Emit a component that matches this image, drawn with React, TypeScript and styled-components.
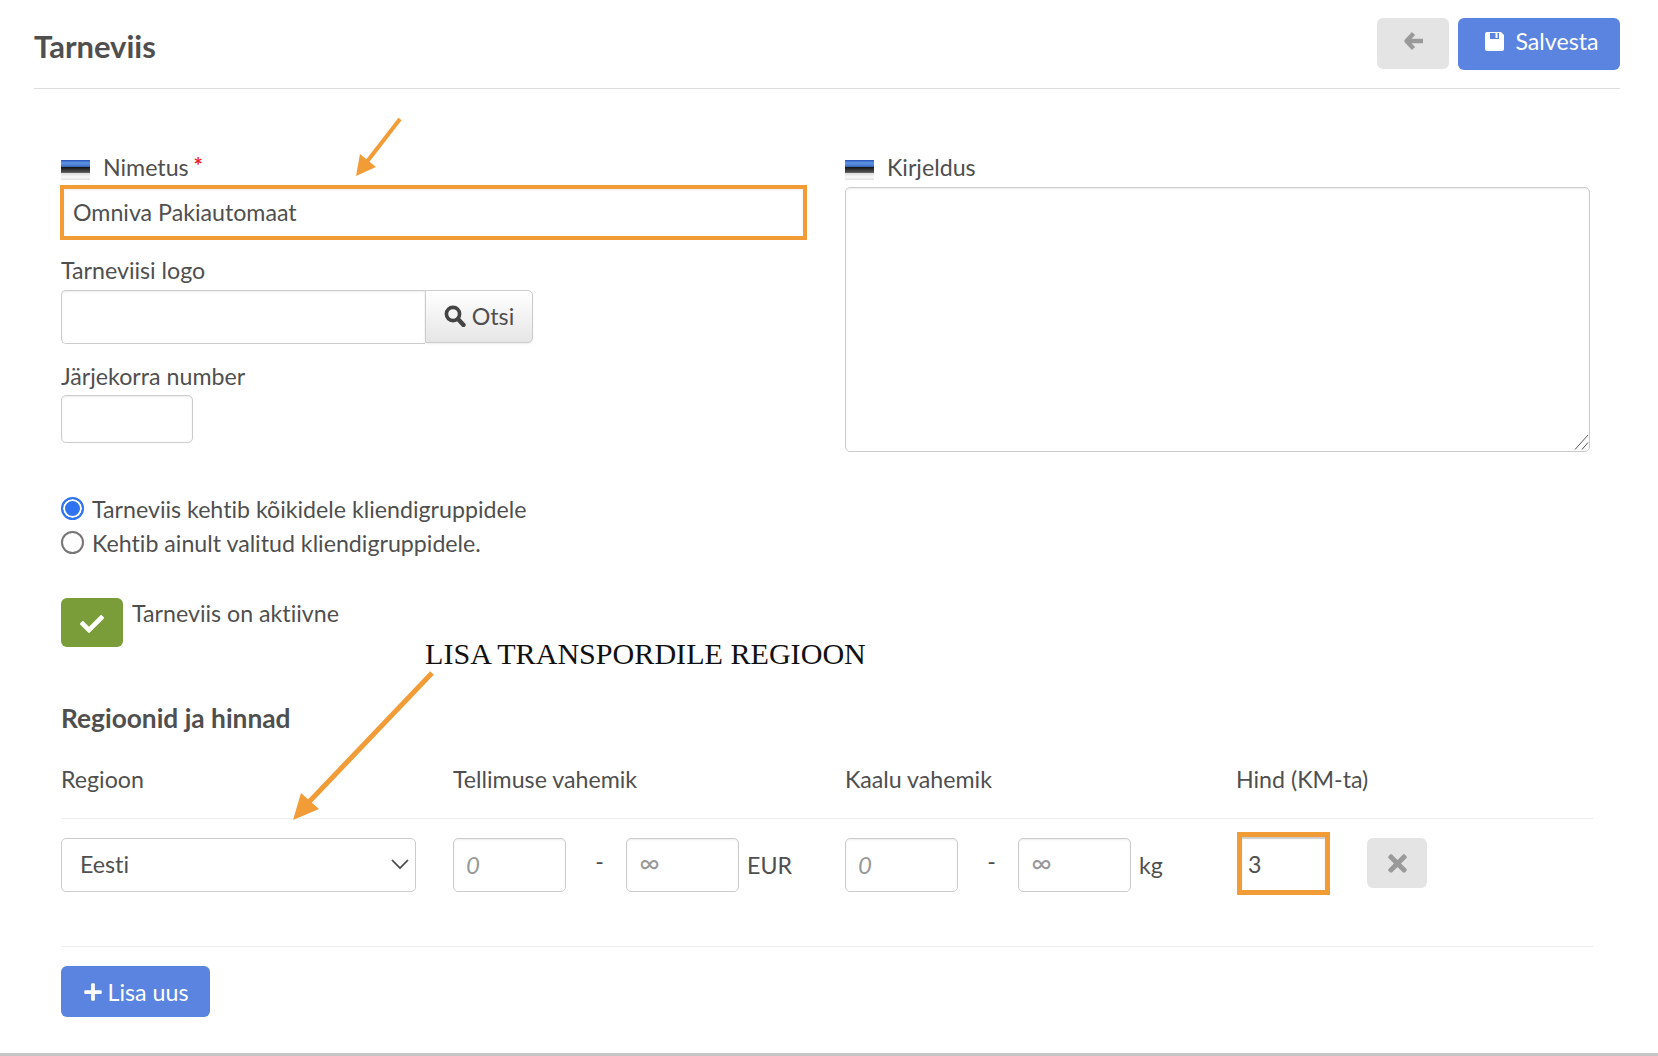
import * as React from "react";
import styled, { createGlobalStyle } from "styled-components";
import { FaCheck, FaPlus, FaTimes } from "react-icons/fa";

const GlobalStyle = createGlobalStyle`
  html, body {
    margin: 0;
    padding: 0;
    background: white;
  }
  body {
    font-family: "Lato", "Liberation Sans", sans-serif;
    font-size: 23.2px;
    font-variant-ligatures: none;
    color: #4f4f4f;
  }
  * {
    box-sizing: border-box;
  }
`;

const Page = styled.div`
  position: relative;
  width: 1658px;
  height: 1056px;
  overflow: hidden;
  border-bottom: 3px solid #c6c6c6;
  padding: 18px 38px 0 34px;
`;

const Header = styled.header`
  display: flex;
  justify-content: space-between;
  height: 71px;
  border-bottom: 1px solid #dddddd;
`;

const Title = styled.h1`
  margin: 8px 0 0;
  font-size: 31px;
  line-height: 40px;
  font-weight: 700;
`;

const HeaderActions = styled.div`
  display: flex;
  gap: 9px;
  align-items: flex-start;
`;

const BaseButton = styled.button`
  display: flex;
  align-items: center;
  justify-content: center;
  border: 0;
  border-radius: 6px;
  font-family: inherit;
  font-size: 23.2px;
  font-variant-ligatures: none;
  padding: 0;
`;

const GreyButton = styled(BaseButton)<{ $w: number; $h: number; $lift?: number }>`
  width: ${({ $w }) => $w}px;
  height: ${({ $h }) => $h}px;
  padding-bottom: ${({ $lift }) => $lift || 0}px;
  background: #e4e4e4;
  color: #9a9a9a;
  flex-shrink: 0;
`;

const BlueButton = styled(BaseButton)<{
  $w: number;
  $h: number;
  $gap: number;
  $lift?: number;
  $nudge?: number;
}>`
  width: ${({ $w }) => $w}px;
  height: ${({ $h }) => $h}px;
  gap: ${({ $gap }) => $gap}px;
  padding-bottom: ${({ $lift }) => $lift || 0}px;
  padding-left: ${({ $nudge }) => $nudge || 0}px;
  background: #5a84df;
  color: white;
`;

const FormArea = styled.div`
  display: grid;
  grid-template-columns: 748px 745px;
  column-gap: 36px;
  padding: 66px 0 0 27px;
`;

const Column = styled.div`
  display: flex;
  flex-direction: column;
`;

const Label = styled.label`
  display: flex;
  align-items: flex-start;
  height: 30px;
  line-height: 24px;
`;

const Flag = styled.span`
  width: 29px;
  height: 20px;
  margin: 5px 13px 0 0;
  background: linear-gradient(
    to bottom,
    #2450b8 0,
    #5f95e2 14%,
    #3f74cc 32%,
    #141414 36%,
    #555555 62%,
    #dddddd 67%,
    #fafafa 85%,
    #e0e0e0 100%
  );
`;

const Required = styled.span`
  color: #ee2222;
  font-size: 22px;
  font-weight: 700;
  line-height: 22px;
  margin-left: 5px;
`;

const TextInput = styled.input<{ $w?: number; $marked?: boolean }>`
  display: block;
  width: ${({ $w }) => ($w ? `${$w}px` : "100%")};
  height: 54px;
  font-family: inherit;
  font-size: 23.2px;
  font-variant-ligatures: none;
  color: #4f4f4f;
  background: white;
  padding: 0 10px;
  border-radius: ${({ $marked }) => ($marked ? "0" : "5px")};
  border: ${({ $marked }) => ($marked ? "4px solid #f29c38" : "1px solid #cccccc")};
  outline: none;
  box-shadow: inset 0 1px 2px rgba(0, 0, 0, 0.08);
`;

const NameInput = styled(TextInput)`
  height: 55px;
  margin-left: -1px;
  padding: 0 9px 2px;
`;

const FieldLabel = styled(Label)`
  margin-top: 15px;
  line-height: 30px;
`;

const SearchRow = styled.div`
  display: flex;
  margin: 5px 0 2px;
`;

const LogoInput = styled(TextInput)`
  border-radius: 5px 0 0 5px;
  border-right: 0;
`;

const SearchButton = styled.button`
  display: flex;
  align-items: center;
  justify-content: center;
  gap: 6px;
  width: 108px;
  height: 53px;
  font-family: inherit;
  font-size: 23.2px;
  color: #4f4f4f;
  border: 1px solid #cccccc;
  border-radius: 0 5px 5px 0;
  background: linear-gradient(to bottom, #ffffff, #e6e6e6);
  box-shadow: 0 1px 2px rgba(0, 0, 0, 0.08);
  padding: 0 0 2px;
`;

const OrderInput = styled(TextInput)`
  height: 48px;
  margin-top: 4px;
`;

const DescriptionWrap = styled.div`
  position: relative;
  width: 745px;
  margin-top: 2px;
`;

const DescriptionArea = styled.textarea`
  display: block;
  width: 745px;
  height: 265px;
  border: 1px solid #cccccc;
  border-radius: 5px;
  outline: none;
  resize: none;
  box-shadow: inset 0 1px 2px rgba(0, 0, 0, 0.08);
`;

const GripIcon = styled.svg`
  position: absolute;
  right: 1px;
  bottom: 2px;
`;

const Lower = styled.div`
  padding-left: 27px;
`;

const RadioGroup = styled.div`
  display: flex;
  flex-direction: column;
  gap: 11px;
  margin-top: 45px;
`;

const RadioRow = styled.label`
  display: flex;
  align-items: center;
  gap: 8px;
  height: 23px;
`;

const RadioMark = styled.span<{ $on?: boolean }>`
  display: block;
  width: 23px;
  height: 23px;
  border-radius: 50%;
  border: 2px solid ${({ $on }) => ($on ? "#2f73f0" : "#767676")};
  background: ${({ $on }) => ($on ? "#2f73f0" : "white")};
  box-shadow: ${({ $on }) => ($on ? "inset 0 0 0 2px white" : "none")};
`;

const ActiveRow = styled.div`
  display: flex;
  gap: 9px;
  margin-top: 44px;
`;

const ActiveToggle = styled.span`
  display: flex;
  align-items: center;
  justify-content: center;
  width: 62px;
  height: 49px;
  border-radius: 6px;
  background: #7a9d3a;
  color: white;
  padding-top: 2px;
`;

const ActiveText = styled.span`
  line-height: 30px;
`;

const SectionTitle = styled.h2`
  margin: 52px 0 0;
  font-size: 26.3px;
  line-height: 38px;
  font-weight: 700;
`;

const RegionTable = styled.div`
  width: 1532px;
  margin-top: 27px;
`;

const ColumnsGrid = styled.div`
  display: grid;
  grid-template-columns: 392px 392px 391px 1fr;
`;

const HeadRow = styled(ColumnsGrid)`
  height: 55px;
  line-height: 30px;
  border-bottom: 1px solid #eeeeee;
`;

const BodyRow = styled(ColumnsGrid)`
  height: 128px;
  padding-top: 19px;
  border-bottom: 1px solid #eeeeee;
`;

const FakeSelect = styled.div`
  display: flex;
  align-items: center;
  justify-content: space-between;
  width: 355px;
  height: 54px;
  padding: 0 6px 2px 18px;
  border: 1px solid #cccccc;
  border-radius: 5px;
`;

const RangeCell = styled.div`
  display: flex;
  align-items: flex-start;
`;

const RangeInput = styled.input`
  width: 113px;
  height: 54px;
  padding: 0 12px 2px;
  font-family: inherit;
  font-size: 24px;
  font-style: italic;
  border: 1px solid #cccccc;
  border-radius: 5px;
  outline: none;
  box-shadow: inset 0 1px 2px rgba(0, 0, 0, 0.08);
  &::placeholder {
    color: #999999;
  }
`;

const InfinityInput = styled(RangeInput)`
  font-style: normal;
  font-size: 28px;
  padding-bottom: 6px;
`;

const Dash = styled.span`
  width: 60px;
  padding-left: 7px;
  text-align: center;
  line-height: 46px;
`;

const Unit = styled.span`
  margin-left: 8px;
  line-height: 54px;
`;

const PriceCell = styled.div`
  display: flex;
  align-items: flex-start;
  gap: 37px;
`;

const PriceInput = styled(TextInput)`
  width: 93px;
  height: 63px;
  margin-top: -6px;
  margin-left: 1px;
  padding: 0 6px;
  border-width: 5px;
  box-shadow: inset 0 2px 1px #cccccc;
`;

const AddRow = styled.div`
  margin-top: 19px;
`;

const NoteText = styled.div`
  position: absolute;
  left: 425px;
  top: 636px;
  font-family: "Liberation Serif", serif;
  font-size: 30.1px;
  line-height: 36px;
  color: #111111;
  white-space: nowrap;
`;

const Annotations = styled.svg`
  position: absolute;
  left: 0;
  top: 0;
  pointer-events: none;
`;

function BackIcon() {
  return (
    <svg width="20" height="20" viewBox="0 0 20 20" fill="none" stroke="#9a9a9a" strokeWidth="4.4" strokeLinejoin="round">
      <path d="M10.5 2.5L3.5 10l7 7.5M4 10h16" />
    </svg>
  );
}

function SaveIcon() {
  return (
    <svg width="19" height="19" viewBox="0 0 19 19" fill="white">
      <path
        fillRule="evenodd"
        d="M2 0h14l3 3v14a2 2 0 0 1-2 2H2a2 2 0 0 1-2-2V2a2 2 0 0 1 2-2zm3 1v6h9V1h-1.5v5h-2V1z"
      />
    </svg>
  );
}

function SearchIcon() {
  return (
    <svg width="22" height="22" viewBox="0 0 22 22" fill="none" stroke="#444444">
      <circle cx="9" cy="9" r="6.6" strokeWidth="3.6" />
      <path d="M14 14l5.5 6" strokeWidth="4.4" strokeLinecap="round" />
    </svg>
  );
}

function ChevronIcon() {
  return (
    <svg width="18" height="12" viewBox="0 0 18 12" fill="none" stroke="#444" strokeWidth="1.7">
      <path d="M1 2l8 8 8-8" />
    </svg>
  );
}

export default function App() {
  return (
    <>
      <GlobalStyle />
      <Page>
        <Header>
          <Title>Tarneviis</Title>
          <HeaderActions>
            <GreyButton $w={72} $h={51} $lift={5}>
              <BackIcon />
            </GreyButton>
            <BlueButton $w={162} $h={52} $gap={11} $lift={6} $nudge={6}>
              <SaveIcon />
              Salvesta
            </BlueButton>
          </HeaderActions>
        </Header>

        <FormArea>
          <Column>
            <Label>
              <Flag />
              Nimetus
              <Required>*</Required>
            </Label>
            <NameInput $marked $w={747} defaultValue="Omniva Pakiautomaat" />
            <FieldLabel>Tarneviisi logo</FieldLabel>
            <SearchRow>
              <LogoInput $w={364} />
              <SearchButton>
                <SearchIcon />
                Otsi
              </SearchButton>
            </SearchRow>
            <FieldLabel>Järjekorra number</FieldLabel>
            <OrderInput $w={132} />
          </Column>
          <Column>
            <Label>
              <Flag />
              Kirjeldus
            </Label>
            <DescriptionWrap>
              <DescriptionArea />
              <GripIcon width="15" height="16" viewBox="0 0 15 16" stroke="#555555" fill="none">
                <path d="M1 15.5L14 1M8 15.5l6-7" />
              </GripIcon>
            </DescriptionWrap>
          </Column>
        </FormArea>

        <Lower>
          <RadioGroup>
            <RadioRow>
              <RadioMark $on />
              Tarneviis kehtib kõikidele kliendigruppidele
            </RadioRow>
            <RadioRow>
              <RadioMark />
              Kehtib ainult valitud kliendigruppidele.
            </RadioRow>
          </RadioGroup>

          <ActiveRow>
            <ActiveToggle>
              <FaCheck size={24} />
            </ActiveToggle>
            <ActiveText>Tarneviis on aktiivne</ActiveText>
          </ActiveRow>

          <SectionTitle>Regioonid ja hinnad</SectionTitle>

          <RegionTable>
            <HeadRow>
              <span>Regioon</span>
              <span>Tellimuse vahemik</span>
              <span>Kaalu vahemik</span>
              <span>Hind (KM-ta)</span>
            </HeadRow>
            <BodyRow>
              <FakeSelect>
                Eesti
                <ChevronIcon />
              </FakeSelect>
              <RangeCell>
                <RangeInput placeholder="0" />
                <Dash>-</Dash>
                <InfinityInput placeholder="∞" />
                <Unit>EUR</Unit>
              </RangeCell>
              <RangeCell>
                <RangeInput placeholder="0" />
                <Dash>-</Dash>
                <InfinityInput placeholder="∞" />
                <Unit>kg</Unit>
              </RangeCell>
              <PriceCell>
                <PriceInput $marked defaultValue="3" />
                <GreyButton $w={60} $h={50}>
                  <FaTimes size={27} />
                </GreyButton>
              </PriceCell>
            </BodyRow>
          </RegionTable>

          <AddRow>
            <BlueButton $w={149} $h={51} $gap={5}>
              <FaPlus size={20} />
              Lisa uus
            </BlueButton>
          </AddRow>
        </Lower>

        <NoteText>LISA TRANSPORDILE REGIOON</NoteText>

        <Annotations width="1658" height="1056" viewBox="0 0 1658 1056">
          <g fill="#f29c38" stroke="#f29c38">
            <path d="M400 119L366 163" strokeWidth="4" fill="none" />
            <path d="M356 176L360 154L376 167Z" strokeWidth="0" />
            <path d="M432 673L308 803" strokeWidth="5" fill="none" />
            <path d="M293 820L301 793L319 809Z" strokeWidth="0" />
          </g>
        </Annotations>
      </Page>
    </>
  );
}
